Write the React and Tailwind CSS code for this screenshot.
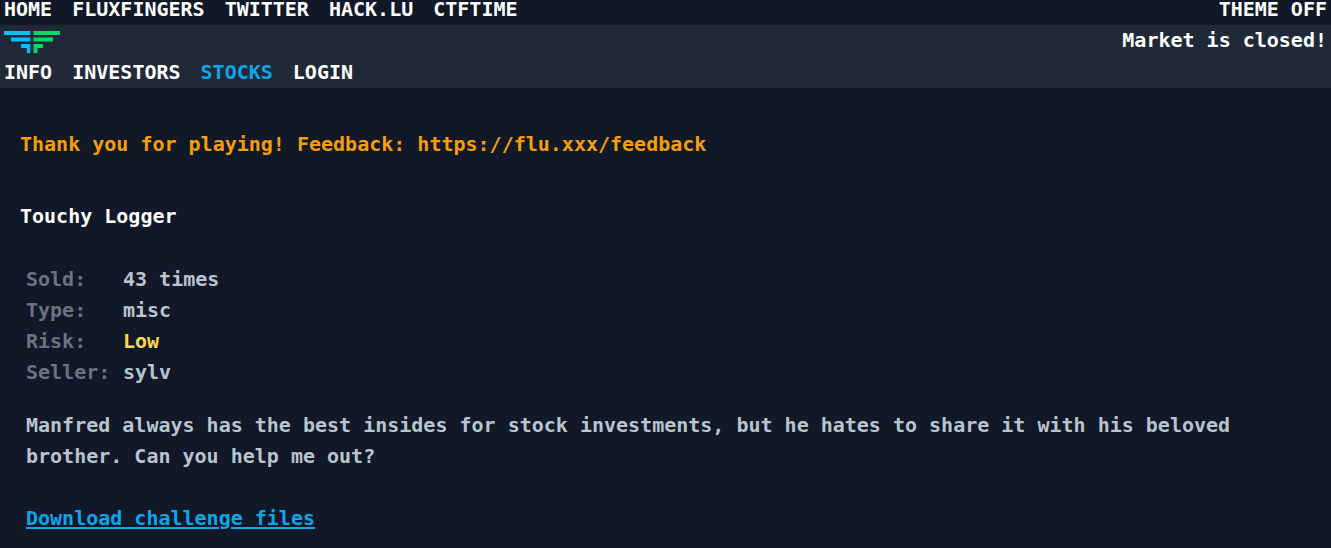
const topLinks = ["HOME", "FLUXFINGERS", "TWITTER", "HACK.LU", "CTFTIME"];

const sections = ["INFO", "INVESTORS", "STOCKS", "LOGIN"];

const details = [
  { label: "Sold:", value: "43 times", tone: "text-[#b8c4ce]" },
  { label: "Type:", value: "misc", tone: "text-[#b8c4ce]" },
  { label: "Risk:", value: "Low", tone: "text-[#ffd84d]" },
  { label: "Seller:", value: "sylv", tone: "text-[#b8c4ce]" },
];

function Logo() {
  return (
    <svg viewBox="0 0 56 22" className="h-[22px] w-14" role="img" aria-label="FluxFingers">
      <path fill="#00bfff" d="M0 0h26.3v4H0zM7 6.5h19.3v4H7zM17 13h9.3v9h-3.5v-5H17z" />
      <path fill="#00d966" d="M29.5 0H56v4H29.5zM29.5 6.5H49v4H29.5zM29.5 13H39v4h-5.5v5h-4z" />
    </svg>
  );
}

export default function App() {
  return (
    <div className="min-h-screen bg-[#111827] font-['DejaVu_Sans_Mono','Liberation_Mono',monospace] text-xl leading-[31px] font-bold text-white">
      <header>
        <div className="flex justify-between px-1 pb-[7px] leading-[18px]">
          <nav aria-label="Sites" className="flex gap-5">
            {topLinks.map((name) => (
              <a key={name} href="#">{name}</a>
            ))}
          </nav>
          <button type="button">THEME OFF</button>
        </div>
        <div className="flex items-center justify-between border-b border-[#262626] bg-[#1f2937] px-1 pb-px leading-[30px]">
          <a href="#" className="pt-1"><Logo /></a>
          <p>Market is closed!</p>
        </div>
        <nav aria-label="Sections" className="flex gap-5 bg-[#1f2937] px-1 pb-px leading-[30px]">
          {sections.map((name) => (
            <a key={name} href="#" className={name === "STOCKS" ? "text-[#0ea5e9]" : ""}>{name}</a>
          ))}
        </nav>
      </header>
      <main className="px-5 pt-[41px]">
        <p className="text-[#f59e0b]">Thank you for playing! Feedback: https://flu.xxx/feedback</p>
        <h1 className="mt-[41px]">Touchy Logger</h1>
        <div className="px-1.5 pt-8 text-[#b8c4ce]">
          <dl className="grid grid-cols-[97px_1fr]">
            {details.map(({ label, value, tone }) => (
              <div key={label} className="contents">
                <dt className="text-[#6b7280]">{label}</dt>
                <dd className={tone}>{value}</dd>
              </div>
            ))}
          </dl>
          <p className="mt-[22px] max-w-[1220px]">
            Manfred always has the best insides for stock investments, but he hates to share it with his beloved brother. Can you help me out?
          </p>
          <a href="#" className="mt-[31px] inline-block text-[#0ea5e9] underline decoration-2 underline-offset-2">
            Download challenge files
          </a>
        </div>
      </main>
    </div>
  );
}
